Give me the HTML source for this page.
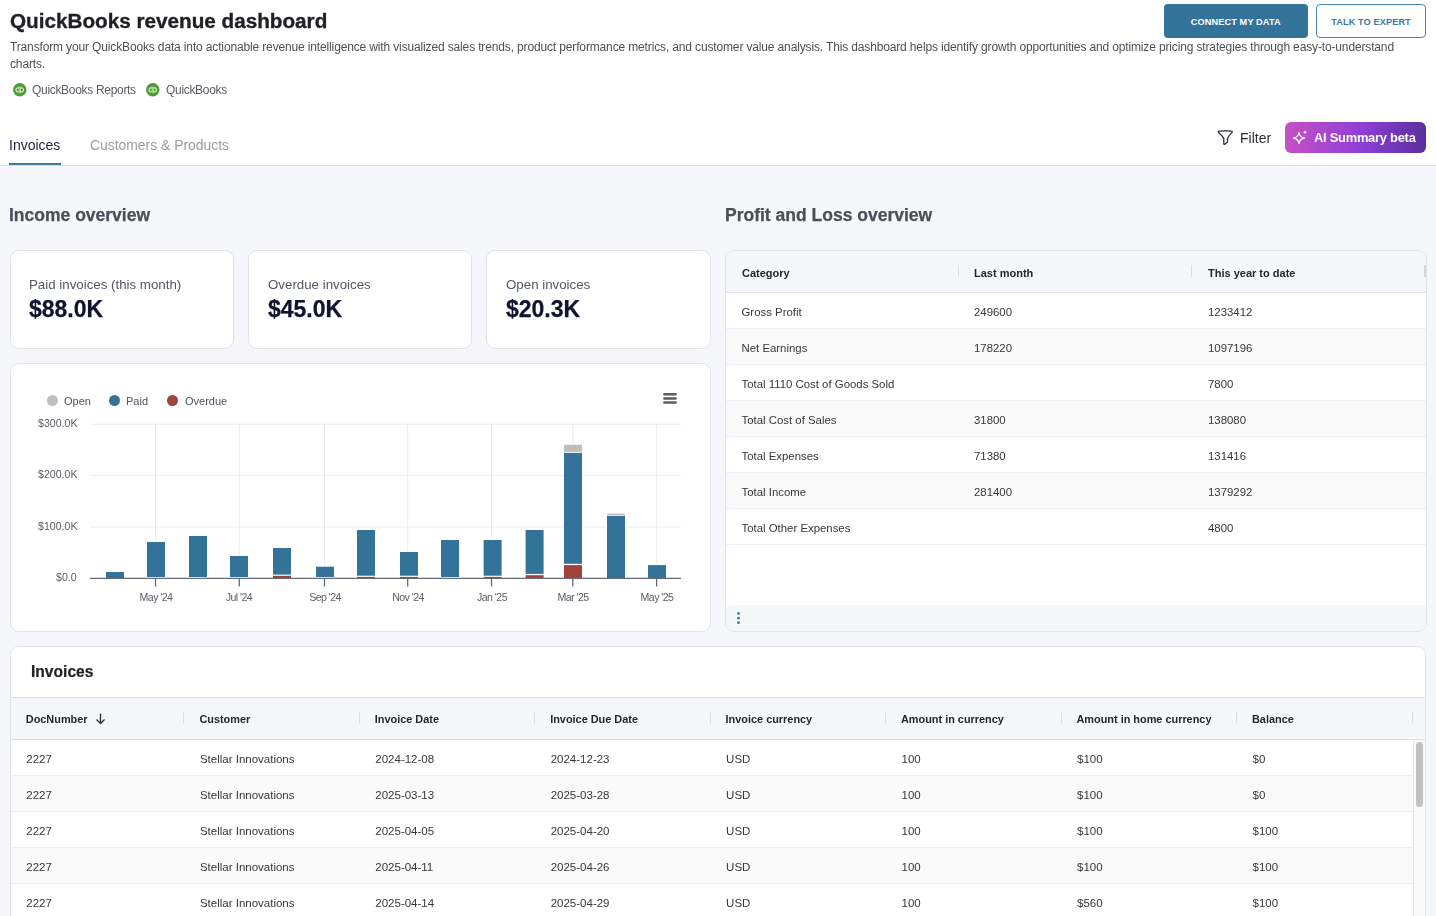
<!DOCTYPE html>
<html><head><meta charset="utf-8">
<style>
*{box-sizing:border-box;margin:0;padding:0}
html,body{width:1436px;height:916px;overflow:hidden;background:#f6f7fb;font-family:"Liberation Sans",sans-serif;color:#222;position:relative}
.a{position:absolute;white-space:nowrap;will-change:transform}
#hdr{position:absolute;left:0;top:0;width:1436px;height:166px;background:#fff;border-bottom:1px solid #dcdfe6}
.card{position:absolute;background:#fff;border:1px solid #e2e4ea;border-radius:9px}
.tag{font-size:12px;letter-spacing:-0.31px;color:#575c68;line-height:14px}
.btn1{position:absolute;left:1164px;top:4px;width:143.5px;height:34px;background:#337399;border-radius:4px;color:#fff;font-size:9.2px;font-weight:bold;line-height:36px;text-align:center;letter-spacing:0.1px}
.btn2{position:absolute;left:1316px;top:4px;width:110px;height:34px;background:#fff;border:1px solid #4a86ad;border-radius:4px;color:#3b78a2;font-size:9.2px;font-weight:bold;line-height:34px;text-align:center;letter-spacing:0.1px}
.ai{position:absolute;left:1284.5px;top:122px;width:141.5px;height:31px;border-radius:6px;background:linear-gradient(90deg,#c850c6 0%,#8d3fd6 55%,#5b2e9e 100%)}
.kl{font-size:13.3px;color:#525764;line-height:16px}
.kv{font-size:23px;font-weight:bold;color:#0f1330;line-height:27px;-webkit-text-stroke:0.25px #0f1330}
.sec{font-size:17.5px;font-weight:bold;color:#4a4f5a;line-height:22px;-webkit-text-stroke:0.25px #4a4f5a}
.lg{font-size:11px;color:#4c5260;line-height:14px}
.dot{position:absolute;width:11px;height:11px;border-radius:50%}
.yl{font-size:10.6px;color:#5b6068;line-height:14px;text-align:right}
.xl{font-size:10.6px;letter-spacing:-0.55px;color:#5b6068;line-height:14px;width:60px;text-align:center}
.plr{left:726px;width:700px;height:36px;border-bottom:1px solid #eeeff2;font-size:11.4px;color:#34373d;line-height:39px}
.plr span{position:absolute;top:0}
.c1{left:15.5px}.c2{left:248px}.c3{left:482px}
.plh{font-size:11px;font-weight:bold;color:#25272c;line-height:14px}
.ivr{left:10.5px;width:1402px;height:36px;border-bottom:1px solid #eeeff2;font-size:11.5px;color:#34373d;line-height:38px}
.ic{position:absolute;top:0}
.ih{position:absolute;top:0;font-size:10.9px;font-weight:bold;color:#25272c;line-height:44px}
.sep{position:absolute;top:15px;width:1px;height:12px;background:#dcdee4}
</style></head><body>
<div id="hdr"></div>
<!-- title -->
<div class="a" style="left:10px;top:8px;line-height:25px;font-size:20.7px;font-weight:bold;color:#1e2024;-webkit-text-stroke:0.35px #1e2024">QuickBooks revenue dashboard</div>
<div class="a" style="left:10px;top:39px;line-height:17.4px;font-size:12px;letter-spacing:-0.144px;color:#4d5058;white-space:normal;width:1400px">Transform your QuickBooks data into actionable revenue intelligence with visualized sales trends, product performance metrics, and customer value analysis. This dashboard helps identify growth opportunities and optimize pricing strategies through easy-to-understand charts.</div>
<!-- tags -->
<svg class="a" style="left:12.9px;top:83.1px" width="14" height="14" viewBox="0 0 14 14"><circle cx="6.75" cy="6.8" r="6.75" fill="#509b38"/><g fill="none" stroke="#cfe6c4" stroke-width="1.2"><path d="M6.1 4.9 H4.9 A1.95 1.95 0 0 0 4.9 8.8 H5.5 M7.4 8.8 H8.6 A1.95 1.95 0 0 0 8.6 4.9 H8"/><path d="M6.15 3.6 V10.2 M7.35 3.6 V10.2" stroke-width="0.9"/></g></svg>
<div class="a tag" style="left:32px;top:82.5px">QuickBooks Reports</div>
<svg class="a" style="left:146.4px;top:83.1px" width="14" height="14" viewBox="0 0 14 14"><circle cx="6.75" cy="6.8" r="6.75" fill="#509b38"/><g fill="none" stroke="#cfe6c4" stroke-width="1.2"><path d="M6.1 4.9 H4.9 A1.95 1.95 0 0 0 4.9 8.8 H5.5 M7.4 8.8 H8.6 A1.95 1.95 0 0 0 8.6 4.9 H8"/><path d="M6.15 3.6 V10.2 M7.35 3.6 V10.2" stroke-width="0.9"/></g></svg>
<div class="a tag" style="left:165.5px;top:82.5px">QuickBooks</div>
<!-- buttons -->
<div class="btn1">CONNECT MY DATA</div>
<div class="btn2">TALK TO EXPERT</div>
<!-- tabs -->
<div class="a" style="left:9.4px;top:137px;font-size:14px;line-height:16px;color:#1d2142">Invoices</div>
<div class="a" style="left:89.6px;top:137px;font-size:13.9px;line-height:16px;color:#9a9ca3">Customers &amp; Products</div>
<div class="a" style="left:9.4px;top:163px;width:52.2px;height:2.2px;background:#3a7ca5"></div>
<!-- filter -->
<svg class="a" style="left:1216px;top:129px" width="19" height="18" viewBox="0 0 19 18"><path d="M3.2 2.1 Q9.3 1.6 15.4 2.1 Q16.8 2.3 16 3.4 Q12.6 6.8 11.5 9.4 V13.1 L8.8 15.2 Q7.8 15.9 7.8 14.8 V9.4 Q6.5 6.8 2.6 3.4 Q1.8 2.3 3.2 2.1 Z" fill="none" stroke="#272b48" stroke-width="1.3" stroke-linejoin="round"/></svg>
<div class="a" style="left:1239.7px;top:130px;font-size:14px;line-height:16px;color:#2b2f3a">Filter</div>
<div class="ai"></div>
<svg class="a" style="left:1292px;top:129px" width="17" height="17" viewBox="0 0 17 17"><path d="M7 3.5 C7.6 7 9 8.4 12.5 9 C9 9.6 7.6 11 7 14.5 C6.4 11 5 9.6 1.5 9 C5 8.4 6.4 7 7 3.5 Z" fill="none" stroke="#fff" stroke-width="1.3" stroke-linejoin="round"/><path d="M13 1.2 Q13.3 2.9 15 3.2 Q13.3 3.5 13 5.2 Q12.7 3.5 11 3.2 Q12.7 2.9 13 1.2 Z" fill="#fff"/></svg>
<div class="a" style="left:1313.5px;top:130px;font-size:12.9px;font-weight:bold;line-height:16px;color:#fff;letter-spacing:-0.25px">AI Summary beta</div>

<!-- section titles -->
<div class="a sec" style="left:9.4px;top:203.5px">Income overview</div>
<div class="a sec" style="left:725.2px;top:203.5px">Profit and Loss overview</div>

<!-- KPI cards -->
<div class="card" style="left:9.5px;top:250px;width:224.5px;height:99px"></div>
<div class="card" style="left:247.8px;top:250px;width:224.5px;height:99px"></div>
<div class="card" style="left:486.1px;top:250px;width:224.5px;height:99px"></div>
<div class="a kl" style="left:29.2px;top:276.5px">Paid invoices (this month)</div>
<div class="a kl" style="left:267.8px;top:276.5px">Overdue invoices</div>
<div class="a kl" style="left:506px;top:276.5px">Open invoices</div>
<div class="a kv" style="left:29px;top:296px">$88.0K</div>
<div class="a kv" style="left:267.5px;top:296px">$45.0K</div>
<div class="a kv" style="left:505.8px;top:296px">$20.3K</div>

<!-- chart card -->
<div class="card" style="left:9.5px;top:363px;width:701px;height:269px"></div>
<div class="dot" style="left:47.4px;top:395.4px;background:#bfbfbf"></div>
<div class="a lg" style="left:64.3px;top:394px">Open</div>
<div class="dot" style="left:109.3px;top:395.4px;background:#337399"></div>
<div class="a lg" style="left:126.1px;top:394px">Paid</div>
<div class="dot" style="left:167.1px;top:395.4px;background:#a0433a"></div>
<div class="a lg" style="left:184.6px;top:394px">Overdue</div>
<svg class="a" style="left:662px;top:391px" width="16" height="14" viewBox="0 0 16 14"><path d="M2.3 3.3 H13.7 M2.3 7.5 H13.7 M2.3 11.5 H13.7" stroke="#5e5e5e" stroke-width="2.4" stroke-linecap="round"/></svg>
<svg class="a" style="left:0;top:0" width="1436" height="916" viewBox="0 0 1436 916"><line x1="90" y1="424.3" x2="681" y2="424.3" stroke="#ebecf1" stroke-width="1"/><line x1="90" y1="475.6" x2="681" y2="475.6" stroke="#ebecf1" stroke-width="1"/><line x1="90" y1="527.0" x2="681" y2="527.0" stroke="#ebecf1" stroke-width="1"/><line x1="155.5" y1="424" x2="155.5" y2="578.3" stroke="#ebecf1" stroke-width="1"/><line x1="239.3" y1="424" x2="239.3" y2="578.3" stroke="#ebecf1" stroke-width="1"/><line x1="324.5" y1="424" x2="324.5" y2="578.3" stroke="#ebecf1" stroke-width="1"/><line x1="407.7" y1="424" x2="407.7" y2="578.3" stroke="#ebecf1" stroke-width="1"/><line x1="491.5" y1="424" x2="491.5" y2="578.3" stroke="#ebecf1" stroke-width="1"/><line x1="572.8" y1="424" x2="572.8" y2="578.3" stroke="#ebecf1" stroke-width="1"/><line x1="656.6" y1="424" x2="656.6" y2="578.3" stroke="#ebecf1" stroke-width="1"/><rect x="105" y="571" width="20" height="7.2999999999999545" fill="#fff"/><rect x="106" y="572" width="18" height="6.00" fill="#347399"/><rect x="146" y="541" width="20" height="37.299999999999955" fill="#fff"/><rect x="147" y="542" width="18" height="35.00" fill="#347399"/><rect x="188" y="535" width="20" height="43.299999999999955" fill="#fff"/><rect x="189" y="536" width="18" height="41.00" fill="#347399"/><rect x="229" y="555" width="20" height="23.299999999999955" fill="#fff"/><rect x="230" y="556" width="18" height="21.00" fill="#347399"/><rect x="272" y="547" width="20" height="31.299999999999955" fill="#fff"/><rect x="273" y="548" width="18" height="26.60" fill="#347399"/><rect x="273" y="575.8" width="18" height="2.20" fill="#a1433a"/><rect x="315" y="565.7" width="20" height="12.599999999999909" fill="#fff"/><rect x="316" y="566.7" width="18" height="10.30" fill="#347399"/><rect x="356" y="529" width="20" height="49.299999999999955" fill="#fff"/><rect x="357" y="530" width="18" height="45.70" fill="#347399"/><rect x="357" y="576.9" width="18" height="1.10" fill="#a1433a"/><rect x="399" y="551" width="20" height="27.299999999999955" fill="#fff"/><rect x="400" y="552" width="18" height="23.70" fill="#347399"/><rect x="400" y="576.9" width="18" height="1.10" fill="#a1433a"/><rect x="440" y="539" width="20" height="39.299999999999955" fill="#fff"/><rect x="441" y="540" width="18" height="37.00" fill="#347399"/><rect x="482.6" y="539" width="20" height="39.299999999999955" fill="#fff"/><rect x="483.6" y="540" width="18" height="35.70" fill="#347399"/><rect x="483.6" y="576.9" width="18" height="1.10" fill="#a1433a"/><rect x="524.6" y="529" width="20" height="49.299999999999955" fill="#fff"/><rect x="525.6" y="530" width="18" height="43.90" fill="#347399"/><rect x="525.6" y="575.2" width="18" height="2.80" fill="#a1433a"/><rect x="563" y="443.8" width="20" height="134.49999999999994" fill="#fff"/><rect x="564" y="444.8" width="18" height="7.10" fill="#bebebe"/><rect x="564" y="452.9" width="18" height="110.90" fill="#347399"/><rect x="564" y="565.1" width="18" height="12.90" fill="#a1433a"/><rect x="606" y="512.6" width="20" height="65.69999999999993" fill="#fff"/><rect x="607" y="513.6" width="18" height="1.40" fill="#bebebe"/><rect x="607" y="515.8" width="18" height="62.20" fill="#347399"/><rect x="647" y="564.1" width="20" height="14.199999999999932" fill="#fff"/><rect x="648" y="565.1" width="18" height="12.90" fill="#347399"/><line x1="90" y1="578.3" x2="681" y2="578.3" stroke="#676975" stroke-width="1.3"/><line x1="155.5" y1="578.3" x2="155.5" y2="586.5" stroke="#676975" stroke-width="1.3"/><line x1="239.3" y1="578.3" x2="239.3" y2="586.5" stroke="#676975" stroke-width="1.3"/><line x1="324.5" y1="578.3" x2="324.5" y2="586.5" stroke="#676975" stroke-width="1.3"/><line x1="407.7" y1="578.3" x2="407.7" y2="586.5" stroke="#676975" stroke-width="1.3"/><line x1="491.5" y1="578.3" x2="491.5" y2="586.5" stroke="#676975" stroke-width="1.3"/><line x1="572.8" y1="578.3" x2="572.8" y2="586.5" stroke="#676975" stroke-width="1.3"/><line x1="656.6" y1="578.3" x2="656.6" y2="586.5" stroke="#676975" stroke-width="1.3"/></svg><div class="a yl" style="right:1359px;top:416.0px">$300.0K</div><div class="a yl" style="right:1359px;top:467.4px">$200.0K</div><div class="a yl" style="right:1359px;top:518.8000000000001px">$100.0K</div><div class="a yl" style="right:1359px;top:570.2px">$0.0</div><div class="a xl" style="left:125.5px;top:589.7px">May '24</div><div class="a xl" style="left:209.3px;top:589.7px">Jul '24</div><div class="a xl" style="left:294.5px;top:589.7px">Sep '24</div><div class="a xl" style="left:377.7px;top:589.7px">Nov '24</div><div class="a xl" style="left:461.5px;top:589.7px">Jan '25</div><div class="a xl" style="left:542.8px;top:589.7px">Mar '25</div><div class="a xl" style="left:626.6px;top:589.7px">May '25</div>

<!-- P&L card -->
<div class="card" style="left:725px;top:250px;width:702px;height:382px;overflow:hidden">
  <div style="position:absolute;left:0;top:0;width:100%;height:42px;background:#f6f7fb;border-bottom:1px solid #dfe1e7"></div>
  <div style="position:absolute;left:0;bottom:0;width:100%;height:26px;background:#f6f7fb"></div>
</div>
<div class="a plr" style="top:293px;background:#ffffff"><span class="c1">Gross Profit</span><span class="c2">249600</span><span class="c3">1233412</span></div><div class="a plr" style="top:329px;background:#fafafb"><span class="c1">Net Earnings</span><span class="c2">178220</span><span class="c3">1097196</span></div><div class="a plr" style="top:365px;background:#ffffff"><span class="c1">Total 1110 Cost of Goods Sold</span><span class="c2"></span><span class="c3">7800</span></div><div class="a plr" style="top:401px;background:#fafafb"><span class="c1">Total Cost of Sales</span><span class="c2">31800</span><span class="c3">138080</span></div><div class="a plr" style="top:437px;background:#ffffff"><span class="c1">Total Expenses</span><span class="c2">71380</span><span class="c3">131416</span></div><div class="a plr" style="top:473px;background:#fafafb"><span class="c1">Total Income</span><span class="c2">281400</span><span class="c3">1379292</span></div><div class="a plr" style="top:509px;background:#ffffff"><span class="c1">Total Other Expenses</span><span class="c2"></span><span class="c3">4800</span></div>
<div class="a plh" style="left:741.5px;top:265.5px">Category</div>
<div class="a plh" style="left:974px;top:265.5px">Last month</div>
<div class="a plh" style="left:1207.7px;top:265.5px">This year to date</div>
<div class="a" style="left:957.5px;top:265px;width:1px;height:12px;background:#dcdee4"></div>
<div class="a" style="left:1191px;top:265px;width:1px;height:12px;background:#dcdee4"></div>
<div class="a" style="left:1424px;top:265px;width:2px;height:12px;background:#d6d8de"></div>
<svg class="a" style="left:735px;top:610px" width="7" height="16" viewBox="0 0 7 16"><circle cx="3.5" cy="3.5" r="1.4" fill="#3d7ea6"/><circle cx="3.5" cy="8.2" r="1.4" fill="#3d7ea6"/><circle cx="3.5" cy="12.7" r="1.4" fill="#3d7ea6"/></svg>

<!-- invoices card -->
<div class="card" style="left:9.5px;top:645.5px;width:1416px;height:300px;overflow:hidden"></div>
<div class="a" style="left:10.5px;top:697px;width:1414px;height:43px;background:#f6f7fb;border-top:1px solid #dfe1e7;border-bottom:1px solid #dfe1e7"></div>
<div class="a" style="left:31px;top:661.5px;font-size:15.6px;font-weight:bold;line-height:20px;color:#1f2126;-webkit-text-stroke:0.2px #1f2126">Invoices</div>
<div class="a" style="left:10px;top:697px;width:1415px;height:42px"><span class="ih" style="left:15.8px">DocNumber</span><span class="ih" style="left:189.4px">Customer</span><span class="ih" style="left:364.8px">Invoice Date</span><span class="ih" style="left:540.2px">Invoice Due Date</span><span class="ih" style="left:715.6px">Invoice currency</span><span class="ih" style="left:891px">Amount in currency</span><span class="ih" style="left:1066.5px">Amount in home currency</span><span class="ih" style="left:1242px">Balance</span><span class="sep" style="left:173px"></span><span class="sep" style="left:348.5px"></span><span class="sep" style="left:524px"></span><span class="sep" style="left:699.5px"></span><span class="sep" style="left:875px"></span><span class="sep" style="left:1050.5px"></span><span class="sep" style="left:1226px"></span><span class="sep" style="left:1401.5px"></span>
<svg style="position:absolute;left:85px;top:14.5px" width="11" height="13" viewBox="0 0 11 13"><path d="M5.5 1.5 V11.5 M1.5 7.5 L5.5 11.5 L9.5 7.5" fill="none" stroke="#2a2d33" stroke-width="1.3"/></svg>
</div>
<div class="a ivr" style="top:740px;background:#ffffff"><span class="ic" style="left:15.3px">2227</span><span class="ic" style="left:188.9px">Stellar Innovations</span><span class="ic" style="left:364.3px">2024-12-08</span><span class="ic" style="left:539.7px">2024-12-23</span><span class="ic" style="left:715.1px">USD</span><span class="ic" style="left:890.5px">100</span><span class="ic" style="left:1066.0px">$100</span><span class="ic" style="left:1241.5px">$0</span></div><div class="a ivr" style="top:776px;background:#fafafb"><span class="ic" style="left:15.3px">2227</span><span class="ic" style="left:188.9px">Stellar Innovations</span><span class="ic" style="left:364.3px">2025-03-13</span><span class="ic" style="left:539.7px">2025-03-28</span><span class="ic" style="left:715.1px">USD</span><span class="ic" style="left:890.5px">100</span><span class="ic" style="left:1066.0px">$100</span><span class="ic" style="left:1241.5px">$0</span></div><div class="a ivr" style="top:812px;background:#ffffff"><span class="ic" style="left:15.3px">2227</span><span class="ic" style="left:188.9px">Stellar Innovations</span><span class="ic" style="left:364.3px">2025-04-05</span><span class="ic" style="left:539.7px">2025-04-20</span><span class="ic" style="left:715.1px">USD</span><span class="ic" style="left:890.5px">100</span><span class="ic" style="left:1066.0px">$100</span><span class="ic" style="left:1241.5px">$100</span></div><div class="a ivr" style="top:848px;background:#fafafb"><span class="ic" style="left:15.3px">2227</span><span class="ic" style="left:188.9px">Stellar Innovations</span><span class="ic" style="left:364.3px">2025-04-11</span><span class="ic" style="left:539.7px">2025-04-26</span><span class="ic" style="left:715.1px">USD</span><span class="ic" style="left:890.5px">100</span><span class="ic" style="left:1066.0px">$100</span><span class="ic" style="left:1241.5px">$100</span></div><div class="a ivr" style="top:884px;background:#ffffff"><span class="ic" style="left:15.3px">2227</span><span class="ic" style="left:188.9px">Stellar Innovations</span><span class="ic" style="left:364.3px">2025-04-14</span><span class="ic" style="left:539.7px">2025-04-29</span><span class="ic" style="left:715.1px">USD</span><span class="ic" style="left:890.5px">100</span><span class="ic" style="left:1066.0px">$560</span><span class="ic" style="left:1241.5px">$100</span></div>
<div class="a" style="left:1412.5px;top:740px;width:12px;height:176px;background:#f9f9fa;border-left:1px solid #e6e6e8"></div>
<div class="a" style="left:1415.5px;top:742px;width:6.5px;height:64.5px;background:#c1c1c3;border-radius:4px"></div>
</body></html>
